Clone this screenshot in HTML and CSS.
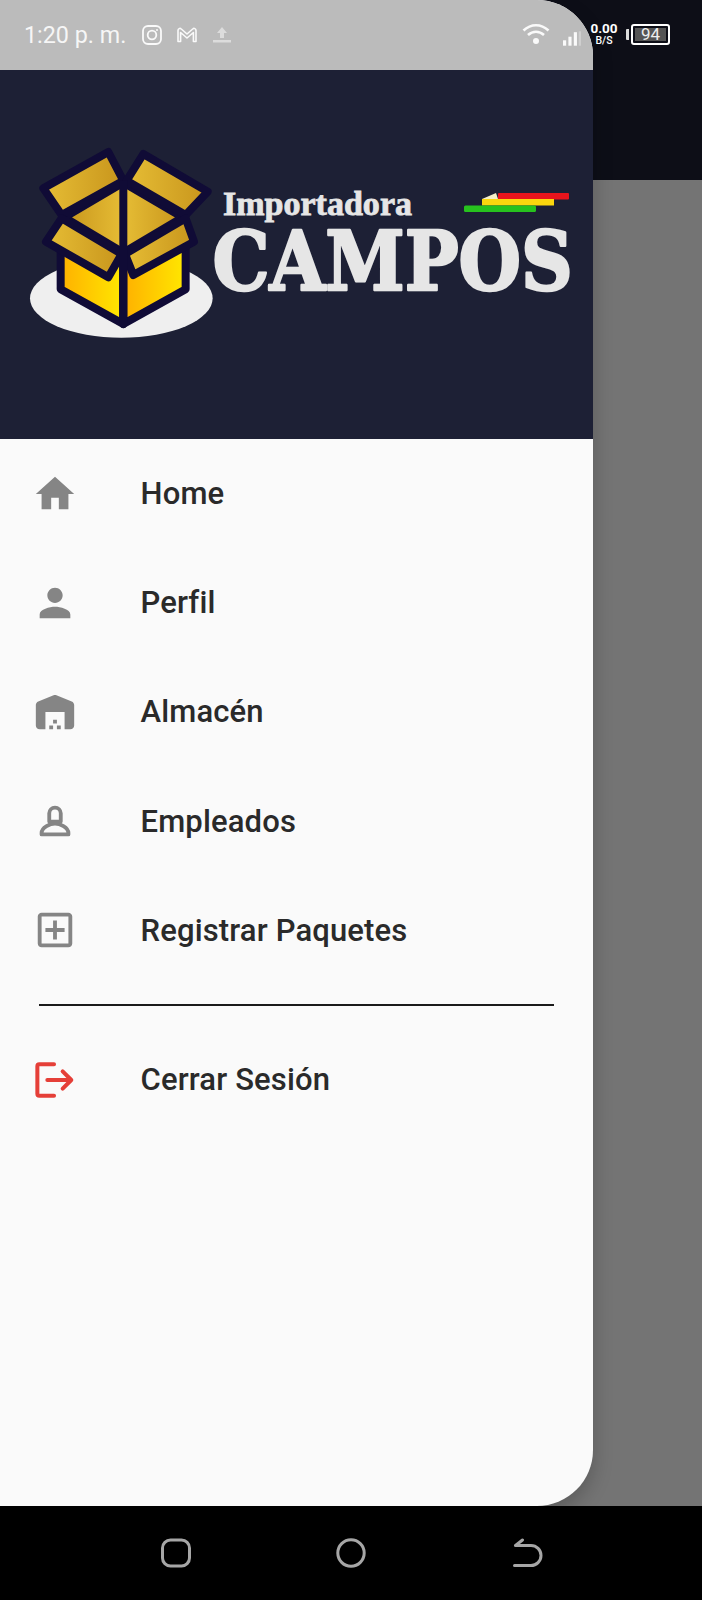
FILE: index.html
```html
<!DOCTYPE html>
<html lang="es">
<head>
<meta charset="utf-8">
<title>Importadora Campos</title>
<link rel="stylesheet" href="styles.css">
</head>
<body>
<div class="screen">
  <div class="backdrop-top"></div>
  <div class="backdrop"></div>
  <nav class="navbar">
    <svg class="nav-icon" viewBox="0 0 30 30"><rect x="1.5" y="2" width="27" height="26" rx="8"/></svg>
    <svg class="nav-icon" viewBox="0 0 30 30"><circle cx="15" cy="15" r="13.2"/></svg>
    <svg class="nav-icon back" viewBox="0 0 30 30"><path d="M1.5 27.5H18a10 10 0 0 0 0-20H2.500M2.500 7.500l7-5.500"/></svg>
  </nav>

  <aside class="drawer">
    <div class="drawer-status"></div>
    <header class="drawer-header">
      <svg class="logo" viewBox="0 70 593 369">
        <defs>
          <linearGradient id="gold" x1="0" y1="0" x2="1" y2="0">
            <stop offset="0" stop-color="#e6bd35"/><stop offset="1" stop-color="#c8951c"/>
          </linearGradient>
          <linearGradient id="goldb" x1="0" y1="0" x2="1" y2="0">
            <stop offset="0" stop-color="#c8951c"/><stop offset=".5" stop-color="#e6bd35"/><stop offset="1" stop-color="#c8951c"/>
          </linearGradient>
          <linearGradient id="yellow" x1="0" y1="0" x2="1" y2="0">
            <stop offset="0" stop-color="#ffb000"/><stop offset="1" stop-color="#ffe800"/>
          </linearGradient>
        </defs>
        <g transform="translate(20 140) scale(.3333)">
          <ellipse cx="304" cy="475" rx="274" ry="118" fill="#efefef"/>
          <g stroke="#100b36" stroke-width="24" stroke-linejoin="round">
            <polygon points="122,325 122,448 310,552 310,340" fill="url(#yellow)"/>
            <polygon points="497,318 497,448 310,552 310,340" fill="url(#yellow)"/>
            <polygon points="310,128 488,232 310,338 133,232" fill="url(#goldb)"/>
            <polygon points="265,36 310,122 125,225 70,145" fill="url(#gold)"/>
            <polygon points="370,42 563,155 497,225 320,122" fill="url(#gold)"/>
            <polygon points="125,235 305,342 265,412 78,305" fill="url(#gold)"/>
            <polygon points="497,235 522,305 340,405 315,342" fill="url(#gold)"/>
            <line x1="310" y1="122" x2="310" y2="552"/>
          </g>
        </g>
        <text class="logo-small" x="223" y="215" textLength="189" lengthAdjust="spacingAndGlyphs">Importadora</text>
        <text class="logo-big" transform="translate(212.500 290) scale(.875 1)">CAMPOS</text>
        <polygon points="482,199 496,193 498,199" fill="#f4efc8"/>
        <rect x="498" y="193" width="71" height="6.5" rx="1" fill="#e8141c"/>
        <rect x="482" y="199" width="72" height="6.5" fill="#fbd60e"/>
        <rect x="464" y="205.500" width="72" height="6.500" rx="1.500" fill="#27c21e"/>
      </svg>
    </header>
    <ul class="menu">
      <li class="menu-item">
        <svg class="menu-icon" viewBox="0 0 24 24"><path d="M10 20v-6h4v6h5v-8h3L12 3 2 12h3v8z"/></svg>
        <span>Home</span>
      </li>
      <li class="menu-item">
        <svg class="menu-icon" viewBox="0 0 24 24"><path d="M12 12c2.210 0 4-1.790 4-4s-1.790-4-4-4-4 1.790-4 4 1.790 4 4 4zm0 2c-2.670 0-8 1.340-8 4v2h16v-2c0-2.660-5.330-4-8-4z"/></svg>
        <span>Perfil</span>
      </li>
      <li class="menu-item">
        <svg class="menu-icon" viewBox="0 0 24 24"><path d="M22 19V8.350c0-.82-.5-1.550-1.260-1.860l-8-3.200c-.48-.19-1.010-.19-1.490 0l-8 3.200C2.500 6.800 2 7.540 2 8.350V19c0 1.100.9 2 2 2h3v-9h10v9h3c1.100 0 2-.9 2-2zm-11 0H9v2h2v-2zm2-3h-2v2h2v-2zm2 3h-2v2h2v-2z"/></svg>
        <span>Almacén</span>
      </li>
      <li class="menu-item">
        <svg class="menu-icon outline" viewBox="0 0 24 24"><path d="M9 12.300V8a3 3 0 0 1 6 0v4.300zM5 19v-.7c0-3 4.600-5 7-5s7 2 7 5v.7z"/></svg>
        <span>Empleados</span>
      </li>
      <li class="menu-item">
        <svg class="menu-icon" viewBox="0 0 24 24"><path d="M19 3H5c-1.110 0-2 .9-2 2v14c0 1.100.89 2 2 2h14c1.100 0 2-.9 2-2V5c0-1.100-.9-2-2-2zm0 16H5V5h14v14zM11 17h2v-4h4v-2h-4V7h-2v4H7v2h4z"/></svg>
        <span>Registrar Paquetes</span>
      </li>
      <li class="menu-divider"></li>
      <li class="menu-item">
        <svg class="menu-icon logout" viewBox="0 0 24 24"><path d="M11.500 3.800H3.800a1 1 0 0 0-1 1v14.400a1 1 0 0 0 1 1h7.700M8 12h12M16 7.500l4.500 4.500-4.500 4.500"/></svg>
        <span>Cerrar Sesión</span>
      </li>
    </ul>
  </aside>

  <div class="statusbar">
    <div class="status-left">
      <span class="time">1:20 p. m.</span>
      <svg class="st-icon" viewBox="0 0 20 20"><rect x="1" y="1" width="18" height="18" rx="5"/><circle cx="10" cy="10" r="4.300"/><circle class="dot" cx="15" cy="5" r="1"/></svg>
      <svg class="st-icon gm" viewBox="0 0 22 18"><path d="M2 15.500V4.500c0-1.800 2-2.700 3.300-1.500L11 8l5.700-5c1.300-1.200 3.300-.3 3.300 1.500v11h-2.600V6.500L11 12 4.600 6.500v9z"/></svg>
      <svg class="st-icon up" viewBox="0 0 20 18"><path class="solid" d="M10 1l5 6h-3v5H8V7H5zM1 14h18v2.600H1z"/></svg>
    </div>
    <div class="status-right">
      <svg class="wifi" viewBox="0 0 28 23"><path d="M1.500 8.500c7.500-7 17.500-7 25 0M6 13c4.800-4.300 11.200-4.300 16 0"/><circle cx="14" cy="19" r="3"/></svg>
      <svg class="signal" viewBox="0 0 20 16"><rect x="0" y="10" width="3.500" height="6"/><rect x="6" y="6" width="3.500" height="10"/><rect x="12" y="1" width="3.500" height="15"/><rect class="dim" x="17.500" y="0" width="2.500" height="16"/></svg>
      <div class="speed"><span class="speed-num">0.00</span><span class="speed-unit">B/S</span></div>
      <div class="battery">
        <span class="battery-cap"></span>
        <div class="battery-body"><span class="battery-level">94</span></div>
      </div>
    </div>
  </div>
</div>
</body>
</html>
```
FILE: styles.css
```css
* { box-sizing: border-box; }
html, body { margin: 0; padding: 0; }
body { width: 702px; height: 1600px; overflow: hidden; background: #000; font-family: Roboto, "Liberation Sans", sans-serif; }

.screen { position: relative; width: 702px; height: 1600px; display: grid; grid-template-rows: 180px 1fr 94px; }
.backdrop-top { background: #0d0e17; }
.backdrop { background: #747474; }

.navbar { background: #000; display: flex; justify-content: center; align-items: center; gap: 145px; padding-bottom: 1px; }
.nav-icon { width: 30px; height: 30px; fill: none; stroke: #a6a6a6; stroke-width: 3; stroke-linecap: round; stroke-linejoin: round; }
.nav-icon.back { transform: translateX(2px); }

.drawer { position: absolute; top: 0; left: 0; width: 593px; height: 1506px; display: flex; flex-direction: column; overflow: hidden; background: #fafafa; border-radius: 0 56px 56px 0; box-shadow: 0 8px 20px rgba(0,0,0,.22); }
.drawer-status { height: 70px; background: #bbbbbb; flex: none; }
.drawer-header { height: 369px; background: #1d2035; flex: none; }
.logo { display: block; width: 593px; height: 369px; }
.logo-small { font-family: "Liberation Serif", serif; font-weight: 700; font-size: 33px; fill: #e6e6e6; stroke: #e6e6e6; stroke-width: .8px; }
.logo-big { font-family: "DejaVu Serif", serif; font-weight: 700; font-size: 82px; fill: #e6e6e6; stroke: #e6e6e6; stroke-width: 2.500px; stroke-linejoin: round; }

.menu { list-style: none; margin: 0; padding: 0; }
.menu-item { height: 109.200px; display: flex; align-items: center; gap: 63px; padding-left: 31.500px; font-size: 31px; font-weight: 500; letter-spacing: .15px; color: #2a2a2a; }
.menu-icon { width: 46px; height: 46px; flex: none; fill: #858585; }
.menu-icon.outline { fill: none; stroke: #858585; stroke-width: 2; stroke-linejoin: round; }
.menu-icon.logout { fill: none; stroke: #e53f38; stroke-width: 2.100; stroke-linecap: round; stroke-linejoin: round; }
.menu-divider { height: 2px; margin: 19px 39px 19px; width: 515px; background: #1a1a1a; }

.statusbar { position: absolute; top: 0; left: 0; width: 702px; height: 70px; display: flex; justify-content: space-between; align-items: center; padding: 0 32px 0 24px; color: #fff; }
.status-left { display: flex; align-items: center; }
.time { font-size: 23.300px; width: 118px; color: #f6f6f6; white-space: nowrap; }
.st-icon { width: 20px; height: 20px; fill: none; stroke: #fafafa; stroke-width: 1.800; }
.st-icon .dot { fill: #fafafa; stroke: none; }
.st-icon.gm { width: 22px; height: 18px; margin-left: 14px; fill: none; stroke-width: 1.600; stroke-linejoin: round; }
.st-icon.up { width: 20px; height: 18px; margin-left: 14px; stroke: none; }
.st-icon.up .solid { fill: #dcdcdc; }
.status-right { display: flex; align-items: center; margin-top: -2px; }
.wifi { width: 28px; height: 23px; fill: #fafafa; stroke: none; margin-top: -2px; }
.wifi path { fill: none; stroke: #fafafa; stroke-width: 2.600; }
.signal { width: 18px; height: 15px; margin-left: 13px; margin-top: 8px; fill: #fafafa; }
.signal .dim { fill: rgba(255,255,255,.3); }
.speed { display: flex; flex-direction: column; align-items: center; width: 26px; margin-left: 10px; line-height: 1; }
.speed-num { font-size: 13.500px; font-weight: 700; }
.speed-unit { font-size: 10.500px; font-weight: 500; }
.battery { display: flex; align-items: center; margin-left: 9px; }
.battery-cap { width: 3px; height: 11px; background: #dcdcdc; border-radius: 1px 0 0 1px; margin-right: 2px; }
.battery-body { width: 39px; height: 21px; border: 2px solid #fff; border-radius: 3px; padding: 2px; display: flex; }
.battery-level { flex: 1; background: #555; color: #eee; font-size: 17px; line-height: 13px; text-align: center; }
```
